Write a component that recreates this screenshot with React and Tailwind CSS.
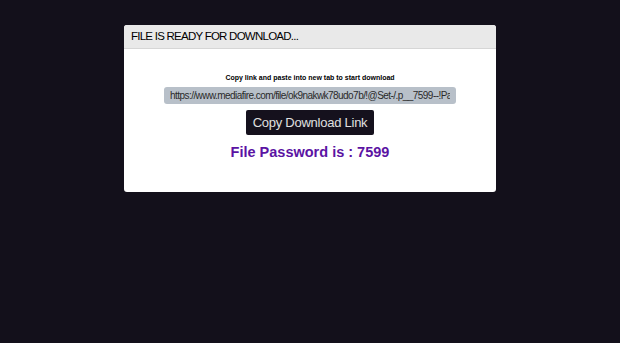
export default function App() {
  const link = "https://www.mediafire.com/file/ok9nakwk78udo7b/!@Set-/.p__7599--!Pa";

  return (
    <div className="min-h-screen w-full bg-[#13101b] pt-[25px] font-['Liberation_Sans',Arial,sans-serif]">
      <div className="ml-[124px] w-[372px] rounded-[3px] bg-white overflow-hidden">
        <div className="h-[24px] bg-[#e9e9e9] border-b border-[#d6d6d6] px-[7px] flex items-center">
          <h1 className="text-[11.5px] text-black tracking-[-0.75px]">FILE IS READY FOR DOWNLOAD...</h1>
        </div>
        <div className="flex flex-col items-center pt-[25px] pb-[32px]">
          <p className="text-[7px] font-bold text-black leading-none">Copy link and paste into new tab to start download</p>
          <input
            readOnly
            value={link}
            className="mt-[6px] w-[292px] h-[17px] rounded-[3px] bg-[#b8c0c9] px-[6px] text-[10px] tracking-[-0.55px] text-[#2a2a2a] outline-none"
          />
          <button className="mt-[6px] h-[25px] w-[128px] rounded-[2px] bg-[#15111d] text-[13px] tracking-[-0.25px] text-[#e0e0e0]">
            Copy Download Link
          </button>
          <h2 className="mt-[10px] text-[14.5px] font-bold text-[#5b13a3] leading-none">File Password is : 7599</h2>
        </div>
      </div>
    </div>
  );
}
